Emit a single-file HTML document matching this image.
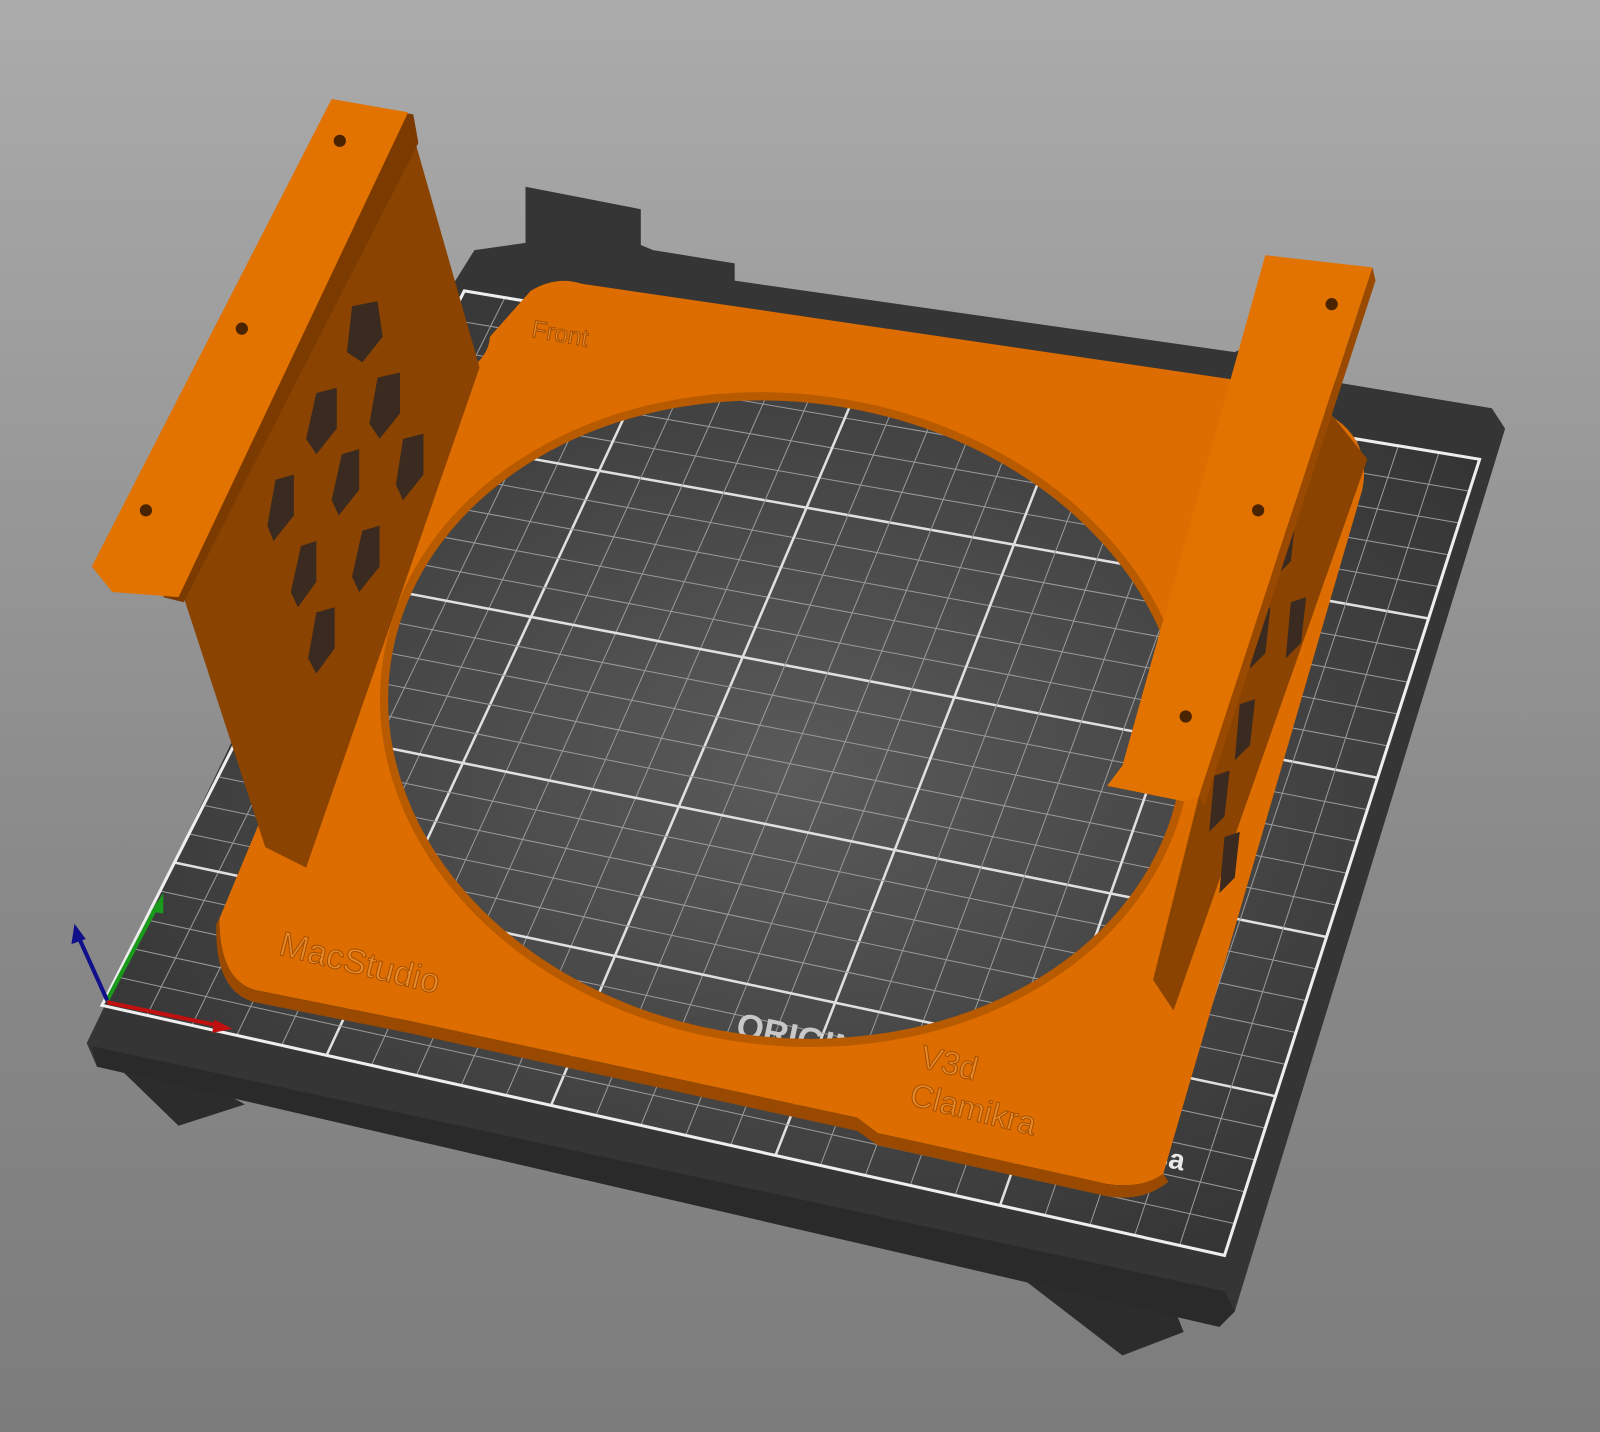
<!DOCTYPE html>
<html><head><meta charset="utf-8"><style>
html,body{margin:0;padding:0;width:1600px;height:1432px;overflow:hidden}
body{background:linear-gradient(#ababab,#8a8a8a 60%,#7c7c7c)}
svg{display:block}
</style></head><body>
<svg id="s" width="1600" height="1432" viewBox="0 0 1568 1403" preserveAspectRatio="none" xmlns="http://www.w3.org/2000/svg">
<defs>
<radialGradient id="g" cx="0.5" cy="0.5" r="0.6"><stop offset="0" stop-color="#5a5a5a"/><stop offset="1" stop-color="#343434"/></radialGradient>
</defs>
<polygon points="110,1040 175,1103 240,1082 200,1060" fill="#2c2c2c"/>
<polygon points="1005,1255 1100,1328 1160,1305 1150,1280" fill="#2c2c2c"/>
<polygon points="465,245 515,238 515,183 628,205 628,240 640,245 720,258 720,275 1210,345 1225,338 1240,363 1462,400 1475,420 1210,1285 1195,1300 95,1045 85,1022 440,285" fill="#353535"/>
<polygon points="95,1045 1195,1300 1210,1285 1200,1265 90,1025" fill="#2a2a2a"/>
<polygon points="455,285 1450,450 1200,1230 100,985" fill="url(#g)"/>
<g id="grid" fill="none"></g>
<polygon points="455,285 1450,450 1200,1230 100,985" fill="none" stroke="#eee" stroke-width="3"/>
<text x="720" y="1015" font-family="Liberation Sans,sans-serif" font-weight="bold" font-size="34" fill="#c8c8c8" transform="rotate(12 720 1015)">ORIGINAL PRUSA</text>
<text x="1112" y="1137" font-family="Liberation Sans,sans-serif" font-weight="bold" font-size="28" fill="#e8e8e8" transform="rotate(12 1112 1137)">usa</text>
<path fill-rule="evenodd" fill="#dd6d00" d="M520,285 Q545,270 570,278 L1230,375 L1300,405 Q1345,430 1335,480 L1140,1150 Q1120,1165 1085,1160 L860,1110 L840,1095 L400,1000 L250,970 Q215,960 215,900 L340,600 L450,370 Q480,350 480,330 Z M770,705 m-395,0 a395,315 8 1,0 790,0 a395,315 8 1,0 -790,0 Z"/>
<path fill="#9a4a00" d="M215,900 Q215,960 250,970 L400,1000 L840,1095 L860,1110 L1085,1160 Q1120,1165 1140,1150 L1145,1158 Q1120,1178 1085,1172 L860,1122 L840,1108 L400,1012 L250,982 Q210,972 212,905 Z"/>
<ellipse cx="770" cy="705" rx="395" ry="315" transform="rotate(8 770 705)" fill="none" stroke="#b85a00" stroke-width="8"/>
<polygon points="400,115 470,360 300,850 260,830 180,585" fill="#8a4300"/>
<polygon points="330,100 405,112 410,140 180,590 160,585" fill="#7a3a00"/>
<polygon points="90,555 325,97 400,110 175,585 110,580" fill="#e27300"/>
<g fill="#3a2a20">
<polygon points="345,300 370,295 375,330 355,355 340,345"/>
<polygon points="310,385 330,380 330,420 310,445 300,430"/>
<polygon points="370,370 392,365 392,405 372,430 362,415"/>
<polygon points="335,445 352,440 352,480 332,505 325,490"/>
<polygon points="395,430 415,425 415,465 395,490 388,475"/>
<polygon points="270,470 288,465 288,505 268,530 262,515"/>
<polygon points="295,535 310,530 310,570 292,595 285,580"/>
<polygon points="355,520 372,515 372,555 352,580 345,565"/>
<polygon points="310,600 328,595 328,635 310,660 302,645"/>
</g>
<circle cx="333" cy="138" r="6" fill="#4a2400"/><circle cx="237" cy="322" r="6" fill="#4a2400"/><circle cx="143" cy="500" r="6" fill="#4a2400"/>
<polygon points="1300,400 1340,450 1150,990 1130,960 1190,720" fill="#8a4300"/>
<g fill="#3a2a20">
<polygon points="1255,510 1270,505 1265,550 1250,565"/>
<polygon points="1230,600 1245,595 1240,640 1225,655"/>
<polygon points="1265,590 1280,585 1275,630 1260,645"/>
<polygon points="1215,690 1230,685 1225,730 1210,745"/>
<polygon points="1190,760 1205,755 1200,800 1185,815"/>
<polygon points="1200,820 1215,815 1210,860 1195,875"/>
</g>
<polygon points="1240,250 1345,262 1175,780 1160,785 1085,770 1100,750" fill="#e27300"/>
<polygon points="1345,262 1348,275 1180,790 1175,780" fill="#9a4a00"/>
<circle cx="1305" cy="298" r="6" fill="#4a2400"/><circle cx="1233" cy="500" r="6" fill="#4a2400"/><circle cx="1162" cy="702" r="6" fill="#4a2400"/>
<text x="272" y="935" font-family="Liberation Sans,sans-serif" font-size="34" fill="#e98a2a" stroke="#a55000" stroke-width="1" transform="rotate(14 272 935)">MacStudio</text>
<text x="520" y="330" font-family="Liberation Sans,sans-serif" font-size="24" fill="#e98a2a" stroke="#a55000" stroke-width="1" transform="rotate(10 520 330)">Front</text>
<text x="900" y="1045" font-family="Liberation Sans,sans-serif" font-size="32" fill="#e98a2a" stroke="#a55000" stroke-width="1" transform="rotate(14 900 1045)">V3d</text>
<text x="890" y="1082" font-family="Liberation Sans,sans-serif" font-size="32" fill="#e98a2a" stroke="#a55000" stroke-width="1" transform="rotate(14 890 1082)">Clamikra</text>
<line x1="105" y1="980" x2="155" y2="885" stroke="#1a9a1a" stroke-width="4"/>
<polygon points="160,875 148,893 160,895" fill="#1a9a1a"/>
<line x1="105" y1="980" x2="77" y2="918" stroke="#10108a" stroke-width="4"/>
<polygon points="73,905 70,925 84,920" fill="#10108a"/>
<line x1="105" y1="982" x2="215" y2="1005" stroke="#c01010" stroke-width="4"/>
<polygon points="228,1008 210,999 208,1012" fill="#c01010"/>
</svg>
<script>
var g=document.getElementById('grid');
var TL=[455,285],TR=[1450,450],BR=[1200,1230],BL=[100,985];
function L(a,b,t){return [a[0]+(b[0]-a[0])*t,a[1]+(b[1]-a[1])*t];}
var n=25,h='';
for(var i=1;i<n;i++){var t=i/n,m=(i%5==0),w=m?2.5:1,c=m?'#e0e0e0':'#9a9a9a';
var a=L(TL,TR,t),b=L(BL,BR,t);h+='<line x1="'+a[0]+'" y1="'+a[1]+'" x2="'+b[0]+'" y2="'+b[1]+'" stroke="'+c+'" stroke-width="'+w+'"/>';
a=L(TL,BL,t);b=L(TR,BR,t);h+='<line x1="'+a[0]+'" y1="'+a[1]+'" x2="'+b[0]+'" y2="'+b[1]+'" stroke="'+c+'" stroke-width="'+w+'"/>';}
g.innerHTML=h;
</script>
</body></html>
